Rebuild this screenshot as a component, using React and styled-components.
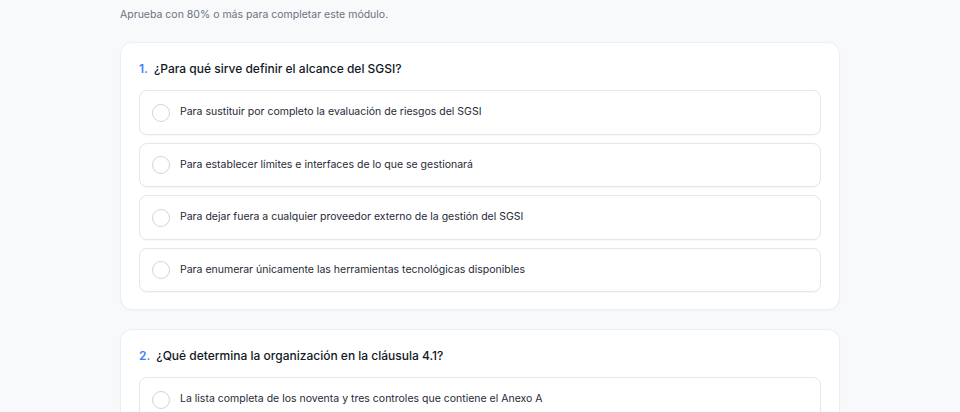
import React from "react";
import styled, { createGlobalStyle } from "styled-components";

const questions = [
  {
    text: "¿Para qué sirve definir el alcance del SGSI?",
    options: [
      "Para sustituir por completo la evaluación de riesgos del SGSI",
      "Para establecer límites e interfaces de lo que se gestionará",
      "Para dejar fuera a cualquier proveedor externo de la gestión del SGSI",
      "Para enumerar únicamente las herramientas tecnológicas disponibles",
    ],
  },
  {
    text: "¿Qué determina la organización en la cláusula 4.1?",
    options: [
      "La lista completa de los noventa y tres controles que contiene el Anexo A",
      "Las cuestiones externas e internas pertinentes para su propósito",
    ],
  },
];

function App() {
  return (
    <>
      <GlobalStyle />
      <Page>
        <Intro>Aprueba con 80% o más para completar este módulo.</Intro>
        <QuestionList>
          {questions.map((q, i) => (
            <Card key={i}>
              <QuestionTitle>
                <Number>{i + 1}.</Number>
                {q.text}
              </QuestionTitle>
              <Options>
                {q.options.map((opt) => (
                  <Option key={opt}>
                    <Radio />
                    <OptionText>{opt}</OptionText>
                  </Option>
                ))}
              </Options>
            </Card>
          ))}
        </QuestionList>
      </Page>
    </>
  );
}

export default App;

const GlobalStyle = createGlobalStyle`
  html, body {
    margin: 0;
    padding: 0;
    background: #f8f9fb;
    font-family: Inter, "Noto Sans", sans-serif;
    -webkit-font-smoothing: antialiased;
  }
`;

const Page = styled.div`
  width: 720px;
  margin: 0 auto;
  padding-top: 7px;
`;

const Intro = styled.p`
  margin: 0;
  font-size: 10.5px;
  line-height: 16px;
  color: #6b7280;
`;

const QuestionList = styled.div`
  display: flex;
  flex-direction: column;
  gap: 19px;
  margin-top: 19px;
`;

const Card = styled.section`
  background: #ffffff;
  border: 1px solid #eceef1;
  border-radius: 12px;
  padding: 16px 18px 17px;
  box-shadow: 0 1px 2px rgba(16, 24, 40, 0.03);
`;

const QuestionTitle = styled.h3`
  margin: 0 0 11px;
  font-size: 12px;
  line-height: 20px;
  font-weight: 500;
  color: #111827;
`;

const Number = styled.span`
  color: #3b82f6;
  font-weight: 600;
  margin-right: 6px;
`;

const Options = styled.div`
  display: flex;
  flex-direction: column;
  gap: 8px;
`;

const Option = styled.label`
  display: flex;
  align-items: center;
  gap: 10px;
  height: 44.5px;
  box-sizing: border-box;
  padding: 0 12px;
  border: 1px solid #e5e7eb;
  border-radius: 8px;
  background: #ffffff;
  box-shadow: 0 1px 1px rgba(16, 24, 40, 0.03);
  cursor: pointer;
`;

const Radio = styled.span`
  width: 18px;
  height: 18px;
  box-sizing: border-box;
  border-radius: 50%;
  border: 1.5px solid #d1d5db;
  flex-shrink: 0;
  margin-top: 1px;
`;

const OptionText = styled.span`
  font-size: 10.5px;
  line-height: 16px;
  color: #1f2937;
`;
